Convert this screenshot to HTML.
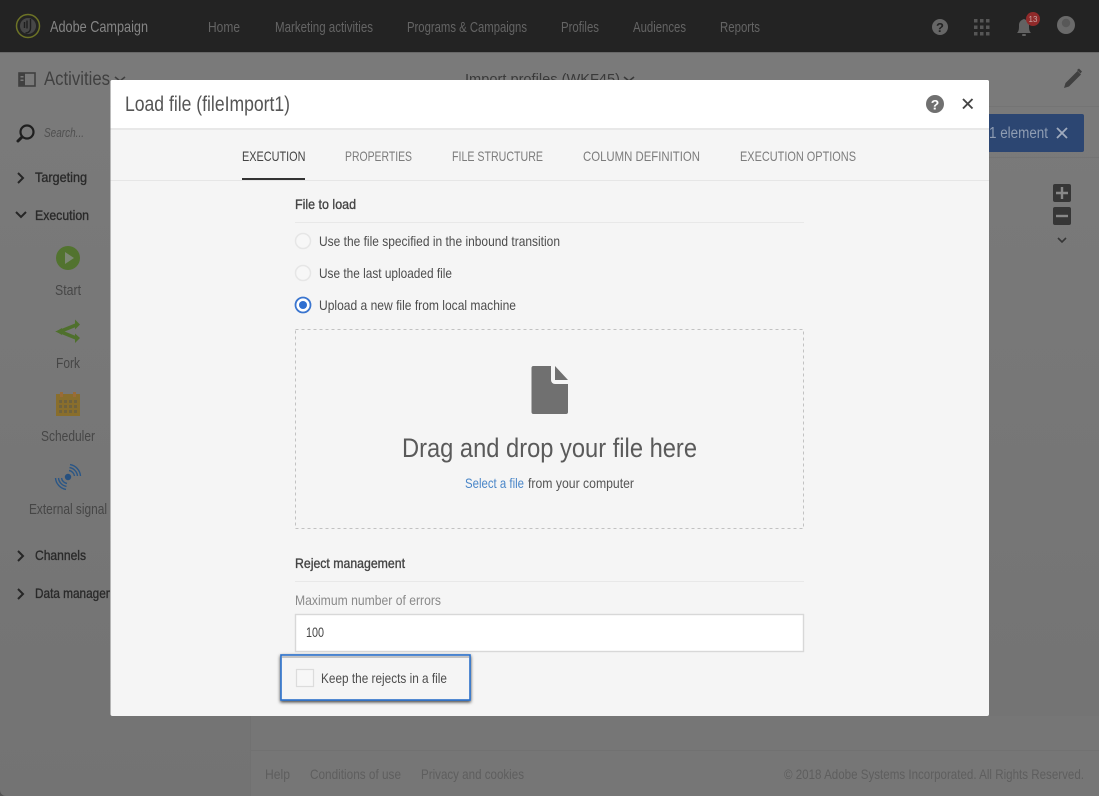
<!DOCTYPE html>
<html><head><meta charset="utf-8"><title>Load file</title>
<style>
html,body{margin:0;padding:0;width:1099px;height:796px;overflow:hidden;background:#747474}
svg{display:block;filter:blur(.3px)}
text{font-family:"Liberation Sans",sans-serif}
</style></head><body>
<svg xmlns="http://www.w3.org/2000/svg" width="1099" height="796" viewBox="0 0 1099 796">
<defs>
<linearGradient id="bg" x1="0" y1="0" x2="0" y2="1"><stop offset="0" stop-color="#7b7b7b"/><stop offset="1" stop-color="#737373"/></linearGradient>
<filter id="sh" x="-10%" y="-20%" width="120%" height="140%"><feDropShadow dx="0" dy="1.500" stdDeviation="1.500" flood-color="#000" flood-opacity=".75"/></filter>
<clipPath id="side"><rect x="0" y="0" width="110" height="796"/></clipPath>
<clipPath id="top"><rect x="0" y="0" width="1099" height="80"/></clipPath>
</defs>
<rect width="1099" height="796" fill="url(#bg)"/>
<rect x="250" y="716" width="849" height="80" fill="#767676"/>
<!-- top bar -->
<rect width="1099" height="52" fill="#232323"/>
<rect y="52" width="1099" height="1" fill="#686868"/>
<circle cx="28" cy="26" r="11.500" fill="none" stroke="#6d7326" stroke-width="1.500"/>
<circle cx="28" cy="26" r="8" fill="#474747"/>
<path d="M30.500 19v9c0 3-2 5-5 5M27 20.500v8M24.500 22v6" fill="none" stroke="#1f1f1f" stroke-width="1.400"/>
<g font-size="14.500" fill="#646464">
<text x="50" y="32" font-size="16" fill="#858585" textLength="98" lengthAdjust="spacingAndGlyphs">Adobe Campaign</text>
<text x="208" y="32" textLength="32" lengthAdjust="spacingAndGlyphs">Home</text>
<text x="275" y="32" textLength="98" lengthAdjust="spacingAndGlyphs">Marketing activities</text>
<text x="407" y="32" textLength="120" lengthAdjust="spacingAndGlyphs">Programs &amp; Campaigns</text>
<text x="561" y="32" textLength="38" lengthAdjust="spacingAndGlyphs">Profiles</text>
<text x="633" y="32" textLength="53" lengthAdjust="spacingAndGlyphs">Audiences</text>
<text x="720" y="32" textLength="40" lengthAdjust="spacingAndGlyphs">Reports</text>
</g>
<circle cx="940" cy="27" r="8" fill="#666"/>
<text x="940" y="32" font-size="13" font-weight="bold" fill="#232323" text-anchor="middle">?</text>
<g fill="#565656">
<rect x="974" y="19" width="3.500" height="3.500"/><rect x="980" y="19" width="3.500" height="3.500"/><rect x="986" y="19" width="3.500" height="3.500"/>
<rect x="974" y="25.500" width="3.500" height="3.500"/><rect x="980" y="25.500" width="3.500" height="3.500"/><rect x="986" y="25.500" width="3.500" height="3.500"/>
<rect x="974" y="32" width="3.500" height="3.500"/><rect x="980" y="32" width="3.500" height="3.500"/><rect x="986" y="32" width="3.500" height="3.500"/>
</g>
<path d="M1017 33c2-2 2-4 2-8 0-3 2-5 5-6 3 1 5 3 5 6 0 4 0 6 2 8z" fill="#626262"/>
<rect x="1022" y="34" width="4" height="2" rx="1" fill="#626262"/>
<circle cx="1033" cy="19" r="7" fill="#902a2a"/>
<text x="1033" y="22" font-size="8" fill="#c9a5a5" text-anchor="middle">13</text>
<circle cx="1066" cy="25" r="9" fill="#6a6a6a"/>
<circle cx="1066" cy="23" r="4.200" fill="#585858"/>
<!-- toolbar -->
<rect y="106" x="110" width="989" height="1" fill="#747474"/>
<rect y="157" x="989" width="110" height="1" fill="#747474"/>
<rect x="19" y="73" width="16" height="13" fill="none" stroke="#404040" stroke-width="1.600"/>
<rect x="19" y="73" width="6" height="13" fill="#404040"/>
<g fill="#7a7a7a"><rect x="20.500" y="76" width="3" height="1.500"/><rect x="20.500" y="79.500" width="3" height="1.500"/></g>
<text x="44" y="85" font-size="19" fill="#404040" textLength="66" lengthAdjust="spacingAndGlyphs">Activities</text>
<path d="M115 77l5 4 5-4" fill="none" stroke="#404040" stroke-width="1.600"/>
<g clip-path="url(#top)">
<text x="465" y="84" font-size="15" fill="#3a3a3a" textLength="155" lengthAdjust="spacingAndGlyphs">Import profiles (WKF45)</text>
<path d="M624 77l5 4 5-4" fill="none" stroke="#3a3a3a" stroke-width="1.600"/>
</g>
<path d="M1064 88l1.500-5 12-12 3.500 3.500-12 12zM1077 70l2-1.500 3 3-1.500 2z" fill="#404040"/>
<!-- side -->
<g clip-path="url(#side)">
<circle cx="27" cy="132" r="6.500" fill="none" stroke="#1f1f1f" stroke-width="2.200"/>
<path d="M22 137l-4 4" stroke="#1f1f1f" stroke-width="3" stroke-linecap="round"/>
<text x="44" y="137" font-size="13" font-style="italic" fill="#505050" textLength="40" lengthAdjust="spacingAndGlyphs">Search...</text>
<g font-size="14" fill="#2a2a2a" stroke="#2a2a2a" stroke-width=".35">
<text x="35" y="182" textLength="52" lengthAdjust="spacingAndGlyphs">Targeting</text>
<text x="35" y="220" textLength="54" lengthAdjust="spacingAndGlyphs">Execution</text>
<text x="35" y="560" textLength="51" lengthAdjust="spacingAndGlyphs">Channels</text>
<text x="35" y="598" textLength="97" lengthAdjust="spacingAndGlyphs">Data management</text>
</g>
<g fill="none" stroke="#262626" stroke-width="2">
<path d="M18 173l5 5-5 5"/>
<path d="M16 212l5 5 5-5"/>
<path d="M18 551l5 5-5 5"/>
<path d="M18 589l5 5-5 5"/>
</g>
<circle cx="68" cy="258" r="12" fill="#52732f"/>
<path d="M65 252l9 6-9 6z" fill="#7d8775"/>
<path d="M76 325L60 331.500 76 338" fill="none" stroke="#4f702c" stroke-width="3.600"/>
<path d="M56 331.500l6-3.500v7zM75 319.500l5 5-5 5zM75 333.500l5 4.500-5 5z" fill="#4f702c"/>
<g font-size="15" fill="#464646">
<text x="55" y="295" textLength="26" lengthAdjust="spacingAndGlyphs">Start</text>
<text x="56" y="368" textLength="24" lengthAdjust="spacingAndGlyphs">Fork</text>
<text x="41" y="441" textLength="54" lengthAdjust="spacingAndGlyphs">Scheduler</text>
<text x="29" y="514" textLength="78" lengthAdjust="spacingAndGlyphs">External signal</text>
</g>
<rect x="56" y="394" width="24" height="22" fill="#896e2c"/>
<rect x="60" y="392" width="3" height="5" fill="#9a6b37"/><rect x="73" y="392" width="3" height="5" fill="#9a6b37"/>
<g fill="#6f623e">
<rect x="59" y="400" width="3" height="3"/><rect x="64" y="400" width="3" height="3"/><rect x="69" y="400" width="3" height="3"/><rect x="74" y="400" width="3" height="3"/>
<rect x="59" y="405" width="3" height="3"/><rect x="64" y="405" width="3" height="3"/><rect x="69" y="405" width="3" height="3"/><rect x="74" y="405" width="3" height="3"/>
<rect x="59" y="410" width="3" height="3"/><rect x="64" y="410" width="3" height="3"/><rect x="69" y="410" width="3" height="3"/><rect x="74" y="410" width="3" height="3"/>
</g>
<circle cx="68" cy="477" r="3.200" fill="#26507f"/>
<g fill="none" stroke="#2a5686" stroke-width="1.400">
<path d="M69 470.500A6.500 6.500 0 0 1 74.500 476"/>
<path d="M69.500 467.600A9.500 9.500 0 0 1 77.500 476"/>
<path d="M70 464.600A12.500 12.500 0 0 1 80.500 476"/>
<path d="M67 483.500A6.500 6.500 0 0 1 61.500 478"/>
<path d="M66.500 486.400A9.500 9.500 0 0 1 58.500 478"/>
<path d="M66 489.400A12.500 12.500 0 0 1 55.500 478"/>
</g>
</g>
<!-- right of modal -->
<rect x="980" y="114" width="104" height="38" rx="2" fill="#2c4672"/>
<text x="989" y="138" font-size="15.500" fill="#8f9db3" textLength="59" lengthAdjust="spacingAndGlyphs">1 element</text>
<path d="M1057 128l10 10M1067 128l-10 10" stroke="#a0abbe" stroke-width="1.800"/>
<rect x="1053" y="184" width="18" height="18" rx="2" fill="#363636"/>
<path d="M1056 193h12M1062 187v12" stroke="#888" stroke-width="2.400"/>
<rect x="1053" y="207" width="18" height="18" rx="2" fill="#363636"/>
<path d="M1056 216h12" stroke="#888" stroke-width="2.400"/>
<path d="M1058 238l4 4 4-4" fill="none" stroke="#363636" stroke-width="1.600"/>
<!-- footer -->
<path d="M250.500 716V796" stroke="#717171"/>
<path d="M250 750.500H1099" stroke="#717171"/>
<g font-size="14" fill="#5e5e5e">
<text x="265" y="779" textLength="25" lengthAdjust="spacingAndGlyphs">Help</text>
<text x="310" y="779" textLength="91" lengthAdjust="spacingAndGlyphs">Conditions of use</text>
<text x="421" y="779" textLength="103" lengthAdjust="spacingAndGlyphs">Privacy and cookies</text>
<text x="784" y="779" textLength="300" lengthAdjust="spacingAndGlyphs">© 2018 Adobe Systems Incorporated. All Rights Reserved.</text>
</g>
<path d="M0 790v6h6a6 6 0 0 1-6-6z" fill="#555"/>
<!-- modal -->
<rect x="110.500" y="80" width="878.500" height="636" rx="2" fill="#f5f5f5"/>
<path d="M110.500 82a2 2 0 0 1 2-2H987a2 2 0 0 1 2 2V128H110.500z" fill="#fff"/>
<rect x="110.500" y="128" width="878.500" height="2" fill="#e8e8e8"/>
<rect x="110.500" y="180" width="878.500" height="1" fill="#e6e6e6"/>
<text x="125" y="111" font-size="21" fill="#555" textLength="165" lengthAdjust="spacingAndGlyphs">Load file (fileImport1)</text>
<circle cx="935" cy="104" r="9" fill="#707070"/>
<text x="935" y="109.500" font-size="14" font-weight="bold" fill="#fff" text-anchor="middle">?</text>
<path d="M963 99l9.500 9.500M972.500 99l-9.500 9.500" stroke="#444" stroke-width="1.900"/>
<g font-size="14" fill="#7c7c7c">
<text x="242" y="161" fill="#444" textLength="63.500" lengthAdjust="spacingAndGlyphs">EXECUTION</text>
<text x="345" y="161" textLength="67" lengthAdjust="spacingAndGlyphs">PROPERTIES</text>
<text x="452" y="161" textLength="91" lengthAdjust="spacingAndGlyphs">FILE STRUCTURE</text>
<text x="583" y="161" textLength="117" lengthAdjust="spacingAndGlyphs">COLUMN DEFINITION</text>
<text x="740" y="161" textLength="116" lengthAdjust="spacingAndGlyphs">EXECUTION OPTIONS</text>
</g>
<rect x="242" y="178" width="63" height="2" fill="#333"/>
<text x="295" y="209" font-size="14" fill="#444" stroke="#444" stroke-width=".35" textLength="61" lengthAdjust="spacingAndGlyphs">File to load</text>
<rect x="295" y="222" width="509" height="1" fill="#e8e8e8"/>
<g fill="#f7f7f7" stroke="#e6e6e6" stroke-width="1.500">
<circle cx="303" cy="241" r="7.500"/>
<circle cx="303" cy="273" r="7.500"/>
</g>
<circle cx="303" cy="305" r="7.500" fill="#fff" stroke="#3a75cf" stroke-width="1.800"/>
<circle cx="303" cy="305" r="4" fill="#2f6fd0"/>
<g font-size="14" fill="#4d4d4d">
<text x="319" y="246" textLength="241" lengthAdjust="spacingAndGlyphs">Use the file specified in the inbound transition</text>
<text x="319" y="278" textLength="133" lengthAdjust="spacingAndGlyphs">Use the last uploaded file</text>
<text x="319" y="310" textLength="197" lengthAdjust="spacingAndGlyphs">Upload a new file from local machine</text>
</g>
<rect x="295.500" y="329.500" width="508" height="199" fill="none" stroke="#c2c2c2" stroke-dasharray="3 3"/>
<path d="M531.500 368a2 2 0 0 1 2-2H551v14a4 4 0 0 0 4 4h13v28a2 2 0 0 1-2 2h-32.500a2 2 0 0 1-2-2z" fill="#707070"/>
<path d="M555 366l13 14h-13z" fill="#707070"/>
<text x="402" y="457" font-size="27" fill="#5a5a5a" textLength="295" lengthAdjust="spacingAndGlyphs">Drag and drop your file here</text>
<text x="465" y="488" font-size="14" fill="#4a86c8" textLength="59" lengthAdjust="spacingAndGlyphs">Select a file</text>
<text x="528" y="488" font-size="14" fill="#555" textLength="106" lengthAdjust="spacingAndGlyphs">from your computer</text>
<text x="295" y="568" font-size="14" fill="#444" stroke="#444" stroke-width=".35" textLength="110" lengthAdjust="spacingAndGlyphs">Reject management</text>
<rect x="295" y="581" width="509" height="1" fill="#e8e8e8"/>
<text x="295" y="605" font-size="14" fill="#8a8a8a" textLength="146" lengthAdjust="spacingAndGlyphs">Maximum number of errors</text>
<rect x="295.500" y="614.500" width="508" height="37" fill="#fff" stroke="#d8d8d8" stroke-width="1.400"/>
<text x="306" y="637" font-size="14" fill="#444" textLength="18" lengthAdjust="spacingAndGlyphs">100</text>
<rect x="281" y="655" width="189" height="45" fill="#f5f5f5" stroke="#2a6fca" stroke-width="1.600" filter="url(#sh)"/>
<rect x="282" y="656" width="187" height="2" fill="#c4c4c4"/>
<rect x="296.500" y="669.500" width="17" height="17" fill="#f7f7f7" stroke="#dcdcdc" stroke-width="1.200"/>
<text x="321" y="683" font-size="14" fill="#4d4d4d" textLength="126" lengthAdjust="spacingAndGlyphs">Keep the rejects in a file</text>
</svg>
</body></html>
